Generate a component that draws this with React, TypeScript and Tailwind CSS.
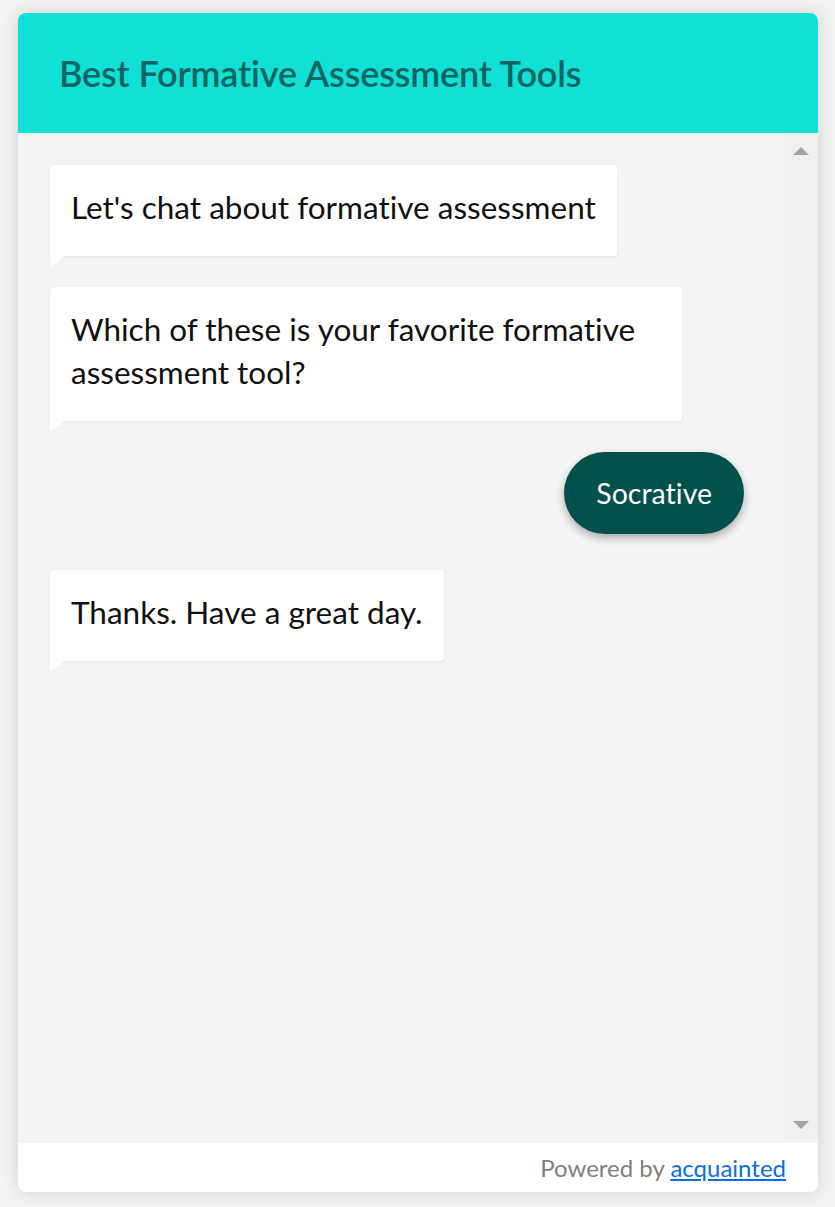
import React from "react";

function Bubble({ children, maxW }: { children: React.ReactNode; maxW?: boolean }) {
  return (
    <div className="relative w-fit">
      <div
        className={`bg-white rounded-[4px] rounded-bl-none px-[21px] pt-[21px] pb-[27px] text-[31.5px] leading-[43px] text-[#111] shadow-[0_1px_3px_rgba(0,0,0,0.08)] ${
          maxW ? "max-w-[632px]" : ""
        }`}
      >
        {children}
      </div>
      <svg className="absolute left-0 top-full" width="15" height="11" viewBox="0 0 15 11">
        <polygon points="0,0 15,0 0,11" fill="#ffffff" />
      </svg>
    </div>
  );
}

export default function App() {
  return (
    <div
      className="min-h-[1207px] bg-[#f3f3f3] pt-[13px] pl-[18px] [font-variant-ligatures:none]"
      style={{ fontFamily: "Lato, 'Open Sans', sans-serif" }}
    >
      <div className="w-[800px] h-[1179px] flex flex-col rounded-[8px] overflow-hidden shadow-[0_0_18px_rgba(0,0,0,0.14)]">
        <div className="h-[120px] shrink-0 bg-[#10e0d6] flex items-center pl-[41px]">
          <h1 className="text-[36px] font-semibold text-[#0a6560] tracking-[-0.15px]">
            Best Formative Assessment Tools
          </h1>
        </div>
        <div className="flex-1 flex bg-[#f4f4f4] min-h-0">
          <div className="flex-1 flex flex-col pl-[32px] pr-[40px] pt-[32px]">
            <Bubble>Let's chat about formative assessment</Bubble>
            <div className="mt-[31px]">
              <Bubble maxW>Which of these is your favorite formative assessment tool?</Bubble>
            </div>
            <div className="mt-[31px] flex justify-end">
              <div className="h-[82px] px-[32px] rounded-full bg-[#00504c] text-white text-[28.5px] flex items-center shadow-[0_4px_8px_rgba(0,0,0,0.3)]">
                Socrative
              </div>
            </div>
            <div className="mt-[36px]">
              <Bubble>Thanks. Have a great day.</Bubble>
            </div>
          </div>
          <div className="w-[34px] bg-[#f0f0f0] flex flex-col items-center justify-between pt-[14px] pb-[14px]">
            <svg width="16" height="8" viewBox="0 0 16 8">
              <polygon points="8,0 16,8 0,8" fill="#a3a3a3" />
            </svg>
            <svg width="16" height="8" viewBox="0 0 16 8">
              <polygon points="0,0 16,0 8,8" fill="#a3a3a3" />
            </svg>
          </div>
        </div>
        <div className="h-[49px] shrink-0 bg-white flex items-center justify-end pr-[32px] text-[24px] text-[#808080]">
          <span>
            Powered by{" "}
            <a href="#" className="text-[#0b6fdf] underline">
              acquainted
            </a>
          </span>
        </div>
      </div>
    </div>
  );
}
